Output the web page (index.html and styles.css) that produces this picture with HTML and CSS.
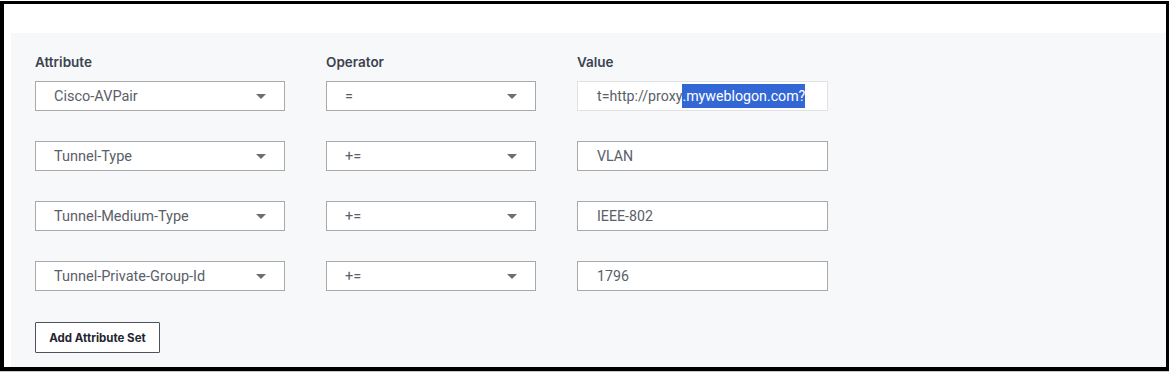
FILE: index.html
```html
<!DOCTYPE html>
<html>
<head>
<meta charset="utf-8">
<link rel="stylesheet" href="styles.css">
</head>
<body>
<div class="frame">
  <div class="panel">
    <div class="grid head">
      <div class="label">Attribute</div>
      <div class="label">Operator</div>
      <div class="label">Value</div>
    </div>
    <div class="grid rows">
      <div class="select"><span>Cisco-AVPair</span><i class="caret"></i></div>
      <div class="select"><span>=</span><i class="caret"></i></div>
      <div class="input input-focus"><span>t=http://proxy</span><span class="sel">.myweblogon.com?</span></div>

      <div class="select"><span>Tunnel-Type</span><i class="caret"></i></div>
      <div class="select"><span>+=</span><i class="caret"></i></div>
      <div class="input"><span>VLAN</span></div>

      <div class="select"><span>Tunnel-Medium-Type</span><i class="caret"></i></div>
      <div class="select"><span>+=</span><i class="caret"></i></div>
      <div class="input"><span>IEEE-802</span></div>

      <div class="select"><span>Tunnel-Private-Group-Id</span><i class="caret"></i></div>
      <div class="select"><span>+=</span><i class="caret"></i></div>
      <div class="input"><span>1796</span></div>
    </div>
    <button class="btn">Add Attribute Set</button>
  </div>
</div>
</body>
</html>
```

FILE: styles.css
```css
html, body {
  margin: 0;
  padding: 0;
  background: #ffffff;
}
body {
  width: 1169px;
  height: 372px;
  overflow: hidden;
  border-bottom: 1px solid #c8c8c8;
  box-sizing: border-box;
}
.frame {
  margin-top: 1px;
  box-sizing: border-box;
  width: 1169px;
  height: 370px;
  border-top: 3px solid #000;
  border-left: 4px solid #000;
  border-right: 3px solid #000;
  border-bottom: 4px solid #000;
  background: #fff;
  padding: 29px 0 0 7px;
}
.panel {
  background: #f7f8fa;
  height: 100%;
  box-sizing: border-box;
  padding: 19px 0 0 24px;
}
.grid {
  display: grid;
  grid-template-columns: 250px 210px 251px;
  column-gap: 41px;
}
.head {
  margin-bottom: 9px;
}
.rows {
  row-gap: 30px;
  grid-auto-rows: 30px;
}
.label {
  font-family: "Inter", "Open Sans", sans-serif;
  font-weight: 600;
  font-size: 13.5px;
  line-height: 20px;
  color: #3b4350;
}
.select, .input {
  box-sizing: border-box;
  height: 30px;
  background: #fff;
  border: 1px solid #a9a9a9;
  display: flex;
  align-items: center;
  padding-left: 18px;
  font-family: "Roboto", "Liberation Sans", sans-serif;
  font-size: 14.5px;
  color: #5a6069;
  position: relative;
}
.input {
  padding-left: 19px;
  font-size: 14.2px;
}
.input-focus {
  border-color: #e0e2e6;
}
.sel {
  background: #3367d6;
  color: #fff;
  line-height: 24px;
}
.caret {
  position: absolute;
  right: 18px;
  top: 12px;
  width: 0;
  height: 0;
  border-left: 5px solid transparent;
  border-right: 5px solid transparent;
  border-top: 5px solid #6b6e73;
}
.btn {
  display: block;
  margin-top: 31px;
  width: 125px;
  height: 31px;
  box-sizing: border-box;
  background: #fff;
  border: 1px solid #4d525c;
  border-radius: 1px;
  font-family: "Inter", "Open Sans", sans-serif;
  font-weight: 700;
  font-size: 11.5px;
  color: #1f2530;
  padding: 0;
}
```
